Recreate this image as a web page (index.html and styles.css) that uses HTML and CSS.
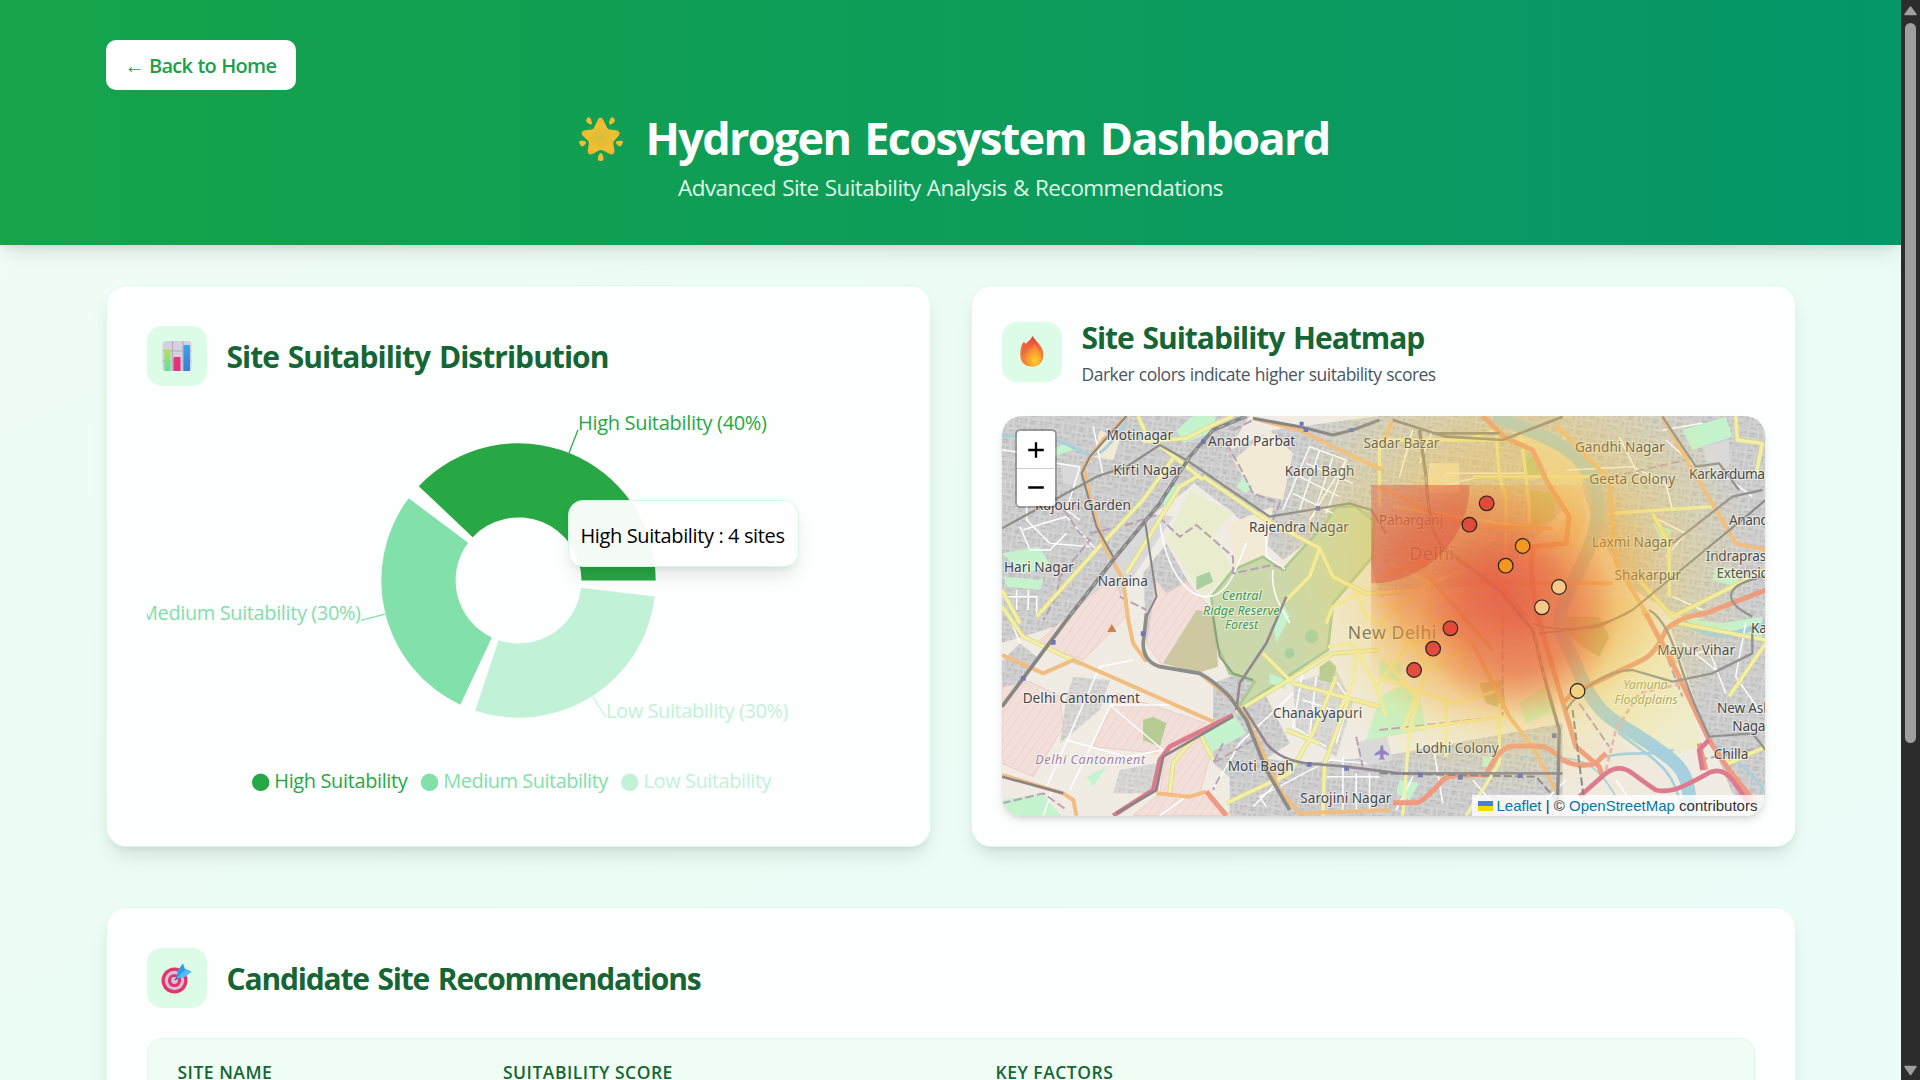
FILE: index.html
```html
<!DOCTYPE html>
<html lang="en">
<head>
<meta charset="utf-8">
<title>Hydrogen Ecosystem Dashboard</title>
<link rel="stylesheet" href="styles.css">
</head>
<body>
<div class="page">
  <header class="hero">
    <a class="back">← Back to Home</a>
    <h1 class="hero-title">
      <svg class="star" viewBox="0 0 44 44">
        <defs><radialGradient id="starFill" cx=".5" cy=".55" r=".6"><stop offset="0" stop-color="#dcb93a"/><stop offset=".6" stop-color="#f0c030"/><stop offset="1" stop-color="#f4a92c"/></radialGradient></defs>
        <path d="M21.500 0.500c1.700 0 2.700 1.800 3.600 3.900l2.900 6.100c.6 1.200 1.300 1.700 2.500 1.900l6.300.9c4.200.6 5 3.500 2.300 6.200l-3.900 4.200c-1 1.100-1.100 1.900-.9 3.300l1.100 5.900c.6 4-2 5.500-5.300 3.800l-5.300-3c-1.900-1-3.700-1-5.600 0l-5.100 3c-3.300 1.800-6 .1-5.300-3.800l1-6.200c.2-1.300 0-2.100-1-3.200L4.200 19.300c-2.700-2.900-1.700-5.500 2.100-6l6.300-.9c1.200-.2 1.900-.7 2.500-1.900l2.900-6.100c.9-2.100 1.800-3.900 3.500-3.900z" fill="url(#starFill)"/>
        <g fill="#f3bd31"><path d="M9 .5c1-.7 2 .2 2.700 1.600.8 1.500 1.700 4.200 1 5-.9 1-3.600-.7-4.900-1.800C6.400 4 7.600 1.500 9 .5zM34 .5c-1-.7-2 .2-2.700 1.600-.8 1.500-1.700 4.200-1 5 .9 1 3.600-.7 4.900-1.800C36.600 4 35.400 1.500 34 .5z"/><path d="M.2 25.500c-.8-1 .3-1.700 1.800-1.700 1.800 0 5 .3 5.300 1.300.3 1.200-2 3.300-3.500 4.300C2.300 30.300.6 26.900.2 25.500zM43.800 25.500c.8-1-.3-1.700-1.800-1.700-1.800 0-5 .3-5.300 1.300-.3 1.200 2 3.300 3.500 4.300 1.500.9 3.200-2.500 3.600-3.900z"/><path d="M21.700 36c1.200 0 2.100 2.400 2.700 4.400.6 2-.2 3.600-2.700 3.600s-3.300-1.600-2.700-3.600c.6-2 1.500-4.400 2.700-4.400z"/></g>
      </svg>
      <span>Hydrogen Ecosystem Dashboard</span>
    </h1>
    <p class="hero-sub">Advanced Site Suitability Analysis &amp; Recommendations</p>
  </header>

  <main class="content">
    <div class="cards">
      <section class="card chart-card">
        <div class="card-head">
          <div class="badge">
            <svg width="30" height="30" viewBox="0 0 30 30">
              <defs>
                <linearGradient id="gb" x1="0" y1="0" x2="0" y2="1"><stop offset="0" stop-color="#b4e356"/><stop offset="1" stop-color="#5fe09c"/></linearGradient>
                <linearGradient id="bb" x1="0" y1="0" x2="0" y2="1"><stop offset="0" stop-color="#35a5f5"/><stop offset="1" stop-color="#3b7bd0"/></linearGradient>
              </defs>
              <rect x=".5" width="29" height="30" rx="3.500" fill="#d6cfdd"/>
              <path d="M10.500 0v30M21 0v30M.5 10h29M.5 20h29" stroke="#b5aec0" stroke-width="1.200"/>
              <path d="M2.500 30V9a1 1 0 0 1 1-1h4a1 1 0 0 1 1 1v21z" fill="url(#gb)"/>
              <path d="M11.500 30V17a1 1 0 0 1 1-1h5a1 1 0 0 1 1 1v13z" fill="#e3337a"/>
              <path d="M21.500 30V5a1 1 0 0 1 1-1h4.500a1 1 0 0 1 1 1v25z" fill="url(#bb)"/>
            </svg>
          </div>
          <h2>Site Suitability Distribution</h2>
        </div>
        <div class="chart">
          <svg class="donut" viewBox="147 386.250 743 419">
            <path fill="#28a745" d="M655.700 580.700A137.200 137.200 0 0 0 418.800 486.400L472.700 537.400A63 63 0 0 1 581.500 580.700Z"/>
            <path fill="#82e0aa" d="M408.600 498.500A137.200 137.200 0 0 0 460.300 704.900L491.800 637.700A63 63 0 0 1 468.100 543Z"/>
            <path fill="#c1f2d7" d="M475.200 710.900A137.200 137.200 0 0 0 654.800 596.700L581.100 588.100A63 63 0 0 1 498.600 640.500Z"/>
            <g fill="none" stroke-width="1.250">
              <path stroke="#28a745" d="M569 453.300L578 430"/>
              <path stroke="#82e0aa" d="M385 614.300L361 620.700"/>
              <path stroke="#c1f2d7" d="M592.700 697L606 717.500"/>
            </g>
            <g class="label">
              <text x="578" y="430" fill="#28a745" textLength="189">High Suitability (40%)</text>
              <text x="361" y="620.700" fill="#82e0aa" text-anchor="end" textLength="221">Medium Suitability (30%)</text>
              <text x="606" y="718" fill="#c1f2d7" textLength="182.500">Low Suitability (30%)</text>
              <circle cx="260.700" cy="782.600" r="8.750" fill="#28a745"/>
              <text x="274.300" y="788" fill="#28a745" textLength="133.500">High Suitability</text>
              <circle cx="429.500" cy="782.600" r="8.750" fill="#82e0aa"/>
              <text x="443.300" y="788" fill="#82e0aa" textLength="165">Medium Suitability</text>
              <circle cx="629.700" cy="782.600" r="8.750" fill="#c1f2d7"/>
              <text x="643.600" y="788" fill="#c1f2d7" textLength="128">Low Suitability</text>
            </g>
          </svg>
          <div class="tooltip">High Suitability : 4 sites</div>
        </div>
      </section>

      <section class="card map-card">
        <div class="card-head">
          <div class="badge">
            <svg width="24" height="31" viewBox="0 0 24 31">
              <defs>
                <linearGradient id="fo" x1="0" y1="0" x2="0" y2="1"><stop offset="0" stop-color="#ee3a3a"/><stop offset=".5" stop-color="#f5793c"/><stop offset="1" stop-color="#ee8434"/></linearGradient>
                <radialGradient id="fi" cx=".6" cy=".75" r=".6"><stop offset="0" stop-color="#fdd22b"/><stop offset="1" stop-color="#f98533"/></radialGradient>
              </defs>
              <path d="M12.500 0c2 3.500 6 6.800 8.600 11 2 3.300 2.900 6.500 1.900 10.800C21.800 27.200 18 30.500 12 30.500 5 30.500.6 26 .3 20 .1 14.500 1 9.500 3.500 6c1.200.2 1.700 1 2 2.300C7 6 10.800 4 12.500 0z" fill="url(#fo)"/>
              <path d="M14.500 8c2 4 7 8 7 14 0 5.500-4 8.500-8.500 8.500S5 27.500 5 23c0-6 7-8.500 9.500-15z" fill="url(#fi)"/>
              <path d="M7.500 8C4.500 11 2.500 14 2.500 19M12 5c-1 4-6 6-7.500 12" fill="none" stroke="#d95f3a" stroke-width=".9"/>
            </svg>
          </div>
          <div>
            <h2 class="t-heat">Site Suitability Heatmap</h2>
            <p class="note">Darker colors indicate higher suitability scores</p>
          </div>
        </div>
        <div class="map">
          <svg class="tiles" viewBox="6 18 2292 1200" preserveAspectRatio="none">
            <defs>
              <pattern id="urb" width="74" height="66" patternUnits="userSpaceOnUse" patternTransform="rotate(8)">
                <rect width="74" height="66" fill="#cccccc"/>
                <path d="M0 12H74M0 34H40M30 50H74M15 0V66M46 12V50M62 0V34M30 34V66" stroke="#dadada" stroke-width="2.500"/>
                <path d="M4 18h8M22 20h16M22 27h12M52 18h6M52 26h6M4 42h8M4 50h6M36 56h14M56 40h12M56 60h10M22 4h14M66 20h6M66 27h5M20 42h6M20 58h6M34 42h8" stroke="#bababa" stroke-width="4"/>
              </pattern>
              <pattern id="mil" width="22" height="22" patternUnits="userSpaceOnUse" patternTransform="rotate(35)">
                <rect width="22" height="22" fill="#f2dfd9"/><path d="M2 0V22" stroke="#efcfc9" stroke-width="2"/>
              </pattern>
              <radialGradient id="hy"><stop offset="0" stop-color="#f5b83c" stop-opacity=".58"/><stop offset=".5" stop-color="#f3c448" stop-opacity=".46"/><stop offset=".78" stop-color="#f1d460" stop-opacity=".24"/><stop offset="1" stop-color="#f1dc70" stop-opacity="0"/></radialGradient>
              <radialGradient id="ho"><stop offset="0" stop-color="#ee6a32" stop-opacity=".55"/><stop offset=".6" stop-color="#f08a34" stop-opacity=".4"/><stop offset="1" stop-color="#f2a53c" stop-opacity="0"/></radialGradient>
              <radialGradient id="hr"><stop offset="0" stop-color="#dc4444" stop-opacity=".55"/><stop offset=".55" stop-color="#e04a44" stop-opacity=".38"/><stop offset="1" stop-color="#e85a3c" stop-opacity="0"/></radialGradient>
              <clipPath id="tile"><rect x="1115" y="225" width="900" height="1000"/></clipPath>
            </defs>
            <rect x="0" y="0" width="2300" height="1220" fill="#f0ece4"/>

            <g fill="url(#urb)">
              <path d="M0 0H760L680 130 560 240 450 320 330 470 200 640 0 700z"/>
              <path d="M570 210L690 120 820 60 1140 18H1690V300L1480 520 1140 560 1070 290 850 450 690 300z"/>
              <path d="M1680 0H2300V640L2050 620 1900 540 1800 380 1700 100z"/>
              <path d="M2010 640L2300 600V1217L2200 1150 2090 880z"/>
              <path d="M690 1030L900 1060 1140 1040 1690 940V1220H690z"/>
              <path d="M430 490L500 400 590 560 470 640 440 700z"/>
              <path d="M700 400L800 330 800 440 700 480z"/>
              <path d="M640 820L740 780 800 860 870 1000 700 1110 640 1060z"/>
              <path d="M0 760L60 700 110 740 60 830 0 900z"/>
              <path d="M220 800L330 810 300 900 180 1000 200 860zM360 1080L470 1060 460 1150 340 1150z" opacity=".75"/>
              <path d="M880 820L1010 780 1060 880 1010 1040 890 960z" opacity=".7"/>
            </g>
            <g fill="#d9d9d9">
              <path d="M180 160l60 10 0 60-50-10zM450 310L520 320 360 560 330 620 200 630z"/>
              <path d="M1070 1000l90-30 20 80-90 20z"/><path d="M2110 110l80-20 0 80-60 20z"/>
            </g>
            <g fill="#f3ead6">
              <path d="M700 150L810 60 880 130 850 270 760 250zM690 340L820 290 800 440 700 480zM300 60l60 30-20 60-60-10z"/>
              <path d="M1290 160l90 0 0 90-100 0zM1540 500l140-30 40 200-150 20z"/>
              <path d="M1480 18L1560 60 1680 110 1750 200 1760 330 1720 420 1640 420 1700 320 1620 140z" fill="#ece0c0"/>
            </g>
            <path d="M570 240L700 310 640 370 700 480 610 560 500 390z" fill="#e9edcd"/>
            <path d="M1680 590L1900 560 2060 800 2110 1010 1960 1050 1820 940 1720 820z" fill="#efeccb"/>
            <path d="M1690 990L1860 1000 2010 1080 2070 1217H1700z" fill="#efe9de"/>

            <g fill="url(#mil)" stroke="#eebfba" stroke-width="2">
              <path d="M340 500L385 610 360 640 250 750 110 700 200 620z"/>
              <path d="M470 510L500 550 560 515 600 560 640 600 650 680 600 700 490 770 440 700z"/>
              <path d="M6 830L90 815 180 860 190 950 100 1100 6 1060z"/>
              <path d="M350 850L620 940 500 1010 470 1030 280 1010z"/>
              <path d="M500 1010L650 970 600 1150 700 1217H400L480 1150z"/>
            </g>

            <path d="M590 600L645 610 655 770 590 790 490 760z" fill="#cdc7a2"/>
            <path d="M700 480L790 440 850 480 900 425 970 350 1010 290 1070 290 1125 335 1120 440 1000 580 985 720 710 900 765 815 690 790 650 700 635 560z" fill="#cbd8ab" stroke="#a9c98f" stroke-width="8"/>
            <g fill="#a8cfa0"><circle cx="936" cy="680" r="20"/><circle cx="870" cy="730" r="15"/><path d="M590 500l40-15 10 30-50 25z"/></g>
            <g fill="#c4f3ce">
              <path d="M530 60l60-50 60 10-20 50-80 30zM6 430l110-20 40 60-90 20zM10 500l120 10-10 30-100-10zM150 120l50-20 20 20-60 20zM500 240l40-20-20 60-30 10zM730 200l30 30-20 20-30-20z"/>
              <path d="M610 970l90-60 40 60-110 60zM820 640l30-60 20 40-40 80zM810 790l50 20 0 30-50-20zM420 80l30-20 10 20-30 20z"/>
              <path d="M1140 860l80-40 40 40 20 100-180 30zM1560 880l90-60 20 80-90 40zM2030 620l140 20 120-20 0 60-200-10zM2050 60l130-40 20 60-120 40z"/>
              <path d="M6 1170l120-20 60 70H6zM1200 1110l60 10-30 50-40-20zM1140 750l70 10-10 60-60-10zM260 1100l60-30-40 60z"/>
              <path d="M1450 1040l30 0 0 30-30 0zM2150 470l80 10-20 50-70-20zM1960 340l60 20-30 40z"/>
            </g>
            <g fill="#b5cc92">
              <path d="M430 930l30-10 40 20-20 70-50-20zM960 770l30-20 20 20-10 50-40-10z"/>
              <path d="M1570 140l50 0 0 60-50 0zM1590 240l80 10-10 80-70 20z"/>
              <path d="M1690 620l110 0 30 60-30 60-50-30-50-40zM1440 820l70-10 10 90-60-20z"/>
            </g>

            <g fill="none" stroke="#a6d0dd" stroke-linecap="round">
              <path d="M6 78C120 72 190 92 240 122S310 130 380 40" stroke-width="9"/>
              <path d="M1500 25C1640 80 1760 120 1788 230S1760 440 1710 540 1680 650 1740 790 1850 930 1950 1000 2070 1080 2075 1217" stroke-width="40"/>
              <path d="M1860 970C1960 1050 2020 1060 2050 1200M1820 1040C1900 1020 1960 1040 2020 1020M2140 1000C2230 1060 2270 1100 2300 1150" stroke-width="8"/>
              <path d="M2060 640C2150 700 2220 670 2300 640" stroke-width="16"/>
              <path d="M1560 1040C1690 1060 1760 1000 1850 1160" stroke-width="5"/>
            </g>

            <g fill="none" stroke="#fff" stroke-width="4.500" stroke-linejoin="round">
              <path d="M6 120L80 130 80 330 150 400 270 410M170 160L240 170 200 300 240 330M70 360L130 340 200 320 290 420M0 560H110V620M50 540V600M85 540V600M20 600L60 700M60 350L90 420 150 420 200 370"/>
              <path d="M480 340C500 480 560 560 620 560S700 500 740 400M800 330L800 440 860 480M820 480C810 560 860 610 870 640M280 50L310 200"/>
              <path d="M400 750L300 770 140 1130M330 890L210 1140M330 885H510M330 885L490 1020 380 1040 200 990M880 850L720 1000 640 1140M800 1190L780 1160 990 1050 1100 1060"/>
              <path d="M850 300L930 110 1040 150 930 330M900 200L1020 260M880 250L1000 310M920 160L1060 220M960 120L900 300M1000 140L940 320M1040 150L980 310"/>
              <path d="M910 780L880 950 980 1010M950 800L930 980M1000 800L1050 870 1010 1000M910 870L1060 920M980 1100H1140M1030 1040V1200M1070 1090V1200M1110 1090V1200"/>
              <path d="M1240 60L1200 200M1300 60L1260 160M1340 190L1580 190M1320 230L1440 200M1700 180L1900 170M1860 80L1920 200M1900 170L2000 220 2020 300M1960 320L2060 370 2000 440M2000 90L2090 170M2020 560L2110 600M2180 200L2260 260M2050 700L2150 780M2240 640L2210 800 2280 900"/>
              <path d="M1240 1100L1190 1200M1300 1000L1330 1180M1420 1110L1480 1180M1700 1110L1640 1170M1900 1180L1850 1110M2090 730L2130 720 2180 850"/>
              <path d="M760 1190L850 1100M560 1160L480 1217M130 1217L160 1130M1990 60L2110 40"/>
            </g>

            <g fill="none" stroke="#b9a0b5" stroke-width="6" stroke-dasharray="26 10">
              <path d="M700 60L760 30M680 100L720 170 760 250 840 280 820 330M150 240L240 370 270 390 180 500 170 560 130 630"/>
              <path d="M270 370L380 345 470 315 540 380 590 345 700 440V490L820 465 860 480M360 560L440 600M660 1100L640 1140M670 1000L640 1060 760 990M1070 980L1090 1070M1840 200L2060 150M1980 680L2050 860"/>
              <path d="M1140 960L1510 920V600M1740 880L1830 1010M6 1180L130 1150 200 1200M2100 1050L2300 1010"/>
            </g>

            <g fill="none" stroke="#d8d78c" stroke-width="14" stroke-linejoin="round">
              <path d="M415 18L440 75 530 145 610 210M430 95L560 85 650 40 700 18M520 145L430 270 280 430 110 620M600 195L540 230 380 490M6 540L60 640"/>
              <path d="M610 200L800 330 960 415 1000 500 1100 550 1280 540M960 415L930 500 850 580M790 730L880 820 1140 890M710 905L1000 730 1140 720M6 590L70 680 240 760"/>
              <path d="M640 1050L600 970 560 1010 520 1060 510 1150M680 1180L870 1090 940 970 1010 800M970 1217L975 1060 1050 860M860 960L960 1000"/>
              <path d="M1960 310L2010 400V560M1900 490L2020 620 2300 480M2210 18L2215 90 2290 100 2270 200M2040 640L2300 690M2190 860L2300 700M2160 1030L2190 1060 2300 1010"/>
            </g>
            <g fill="none" stroke="#f3f0a6" stroke-width="10" stroke-linejoin="round">
              <path d="M415 18L440 75 530 145 610 210M430 95L560 85 650 40 700 18M520 145L430 270 280 430 110 620M600 195L540 230 380 490M6 540L60 640"/>
              <path d="M610 200L800 330 960 415 1000 500 1100 550 1280 540M960 415L930 500 850 580M790 730L880 820 1140 890M710 905L1000 730 1140 720M6 590L70 680 240 760"/>
              <path d="M640 1050L600 970 560 1010 520 1060 510 1150M680 1180L870 1090 940 970 1010 800M970 1217L975 1060 1050 860M860 960L960 1000"/>
              <path d="M985 710L1060 700 1130 830 1230 700 1100 620 1075 550 1000 590 980 640M1075 720L1060 820 1020 900M1130 830L1160 920M1230 700H1420M1140 90L1140 290M1180 290L1500 340 1660 360"/>
              <path d="M1400 90L1490 60 1500 200 1520 260V560M1570 110L1590 290 1590 360M1140 90H1580M1420 200H1770M1830 310L2140 290"/>
              <path d="M1140 640L1290 520 1290 740 1230 960 1210 1217M1290 520L1400 620 1420 700 1560 600M1420 700L1260 600M1420 700L1390 790M1420 700L1290 780M1290 640L1420 600M1140 800L1360 880 1500 840M1340 860V1040M1400 1217L1500 1060V880"/>
              <path d="M1140 590L1290 560 1500 560M1150 740L1250 860 1210 960 1520 920M1170 460L1290 520 1400 480M1200 610L1270 760M1340 560L1500 520"/>
              <path d="M1960 310L2010 400V560M1900 490L2020 620 2300 480M2210 18L2215 90 2290 100 2270 200M2040 640L2300 690M2190 860L2300 700M2160 1030L2190 1060 2300 1010"/>
            </g>

            <g fill="none" stroke="#f2bd80" stroke-width="12" stroke-linejoin="round">
              <path d="M380 18L310 90 250 170 270 260 310 400 370 510 385 630 400 700 440 755"/>
              <path d="M760 25L900 60 1020 120 1150 180M6 735L130 790 220 750 640 935M600 790L700 870 740 920 800 1050 840 1140 900 1210 1170 1200M1180 30L1150 100"/>
              <path d="M6 1095L190 1150 220 1170 230 1217M470 1150L570 1160 620 1145"/>
              <path d="M1140 230L1300 310 1420 350 1660 355M1140 500L1350 430 1480 490 1580 620M1370 520H1840M1670 45L1830 210 1850 460 1960 640"/>
              <path d="M1990 20L2080 180 2210 400 2300 420M1420 700L1530 920 1600 1010 1690 1180M1200 400L1480 720M1930 600L2030 760"/>
            </g>
            <g fill="none" stroke="#ef9a80" stroke-width="15" stroke-linejoin="round">
              <path d="M1450 18L1520 85 1600 120 1640 210 1710 320 1700 400 1600 410 1595 480 1610 600 1680 840 1730 1010 1800 1070 1810 1100"/>
              <path d="M1180 1178H1250Q1270 1178 1330 1110 1350 1090 1460 1095 1500 1010 1540 1008H1620Q1650 1010 1690 1050 1740 1075 1790 1060L1820 1030"/>
              <path d="M1690 880L1720 850 1930 750Q1970 730 2000 660 2040 620 2120 610L2300 540M1940 610L2030 780 2130 990 2190 1080 2270 1180M620 1145L680 1217M2100 1000L2120 1080"/>
            </g>
            <g fill="none" stroke="#dc7b8d" stroke-width="14" stroke-linejoin="round">
              <path d="M340 1217L460 1140 480 1050 510 1010 700 915M1740 1160L1820 1090Q1860 1060 1900 1090T1970 1140Q2010 1150 2060 1125T2130 1088Q2170 1070 2200 1110L2250 1180M2110 1080L2100 1020 2130 990"/>
            </g>
            <path d="M1820 1080L1850 960 1920 850 2050 820" fill="none" stroke="#efb0aa" stroke-width="8" stroke-dasharray="16 10"/>

            <g fill="none" stroke="#868686" stroke-linejoin="round">
              <path d="M740 18L640 60 570 140 480 280 340 450 200 630 6 890" stroke-width="11"/>
              <path d="M760 25L900 50 1000 75 1060 60 1140 30" stroke-width="9"/>
              <path d="M6 355L290 200 380 170 480 105 560 150 810 320 1050 280 1115 300 1160 370" stroke="#909088" stroke-width="7"/>
              <path d="M380 18L270 140 245 190 290 350 340 440M435 330L470 560 440 620" stroke-width="6"/>
              <path d="M440 610L430 700Q430 755 480 770L600 790Q640 810 690 860L740 930 800 1080 870 1200" stroke="#8c8c8a" stroke-width="11"/>
              <path d="M640 620L660 740 700 790 760 810" stroke="#8aa080" stroke-width="6"/>
              <path d="M860 560L800 700 720 820 710 900M730 890L800 1000Q840 1050 920 1060L1040 1070 1200 1090H1690" stroke="#908a90" stroke-width="8"/>
              <path d="M350 1210L470 1140 490 1040 700 920M6 1100L190 1150" stroke="#8a8486" stroke-width="8"/>
              <path d="M1260 60L1280 200Q1290 390 1340 420L1500 540 1600 660 1640 820 1680 960 1675 1170" stroke-width="10"/>
              <path d="M1180 30L1340 80 1510 90 1690 20M1300 70L1500 70" stroke-width="8"/>
              <path d="M1600 640C1700 680 1840 640 1900 600L2070 460 2240 320 2300 270M1620 670L1800 650 1900 600" stroke-width="6"/>
              <path d="M1700 900C1740 840 1820 780 1900 780L2020 815 2140 790 2260 730V650M1950 600C2020 640 2040 780 2090 890L2130 980 2260 970 2300 1020M1990 20L2090 170 2160 160 2220 240M2020 400L2200 260 2290 240M2300 500C2180 520 2160 570 2260 620" stroke="#929290" stroke-width="7"/>
              <path d="M1140 1090L1610 1100 1690 1190M1720 900L1760 1217" stroke-width="6" stroke-dasharray="24 10"/>
            </g>
            <g fill="none" stroke="#c4c4c4" stroke-width="3" stroke-dasharray="18 18"><path d="M740 18L640 60 570 140 480 280 340 450 200 630M1280 200Q1290 390 1340 420L1500 540 1600 660 1640 820"/></g>
            <g fill="#6f76b4"><path d="M604 88h14v14h-14zM900 35h12v12h-12zM912 52h14v14h-14zM1050 54h12v12h-12zM948 288h14v14h-14zM153 690h14v14h-14zM63 798h14v14h-14zM423 664h14v14h-14zM922 1056h14v14h-14zM1034 1068h14v14h-14zM1256 1088h14v14h-14zM1376 1095h14v14h-14zM1556 1090h14v14h-14zM1658 970h14v14h-14z"/></g>
            <path d="M322 666L336 642 350 666z" fill="#cf8247"/>
            <path d="M1147 1005q5 0 5 14l16 12v6l-16-5v13l5 5-10-2-10 2 5-5v-13l-16 5v-6l16-12q0-14 5-14z" fill="#8f7fc4"/>

            <g class="place">
              <text x="320" y="89" textLength="200">Motinagar</text>
              <text x="625" y="107" textLength="262">Anand Parbat</text>
              <text x="340" y="194" textLength="208">Kirti Nagar</text>
              <text x="855" y="198" textLength="210">Karol Bagh</text>
              <text x="1092" y="115" textLength="228">Sadar Bazar</text>
              <text x="105" y="300" textLength="288">Rajouri Garden</text>
              <text x="748" y="366" textLength="300">Rajendra Nagar</text>
              <text x="12" y="487" textLength="210">Hari Nagar</text>
              <text x="294" y="527" textLength="150">Naraina</text>
              <text x="1138" y="345" textLength="193">Paharganj</text>
              <text x="1727" y="125" textLength="270">Gandhi Nagar</text>
              <text x="1770" y="221" textLength="258">Geeta Colony</text>
              <text x="2070" y="208" textLength="228">Karkarduma</text>
              <text x="1778" y="410" textLength="244">Laxmi Nagar</text>
              <text x="2190" y="346" textLength="120">Anand</text>
              <text x="1846" y="509" textLength="200">Shakarpur</text>
              <text x="2120" y="452" textLength="196">Indraprast</text>
              <text x="2152" y="504" textLength="182">Extension</text>
              <text x="68" y="879" textLength="352">Delhi Cantonment</text>
              <text x="820" y="925" textLength="268">Chanakyapuri</text>
              <text x="684" y="1082" textLength="198">Moti Bagh</text>
              <text x="902" y="1179" textLength="274">Sarojini Nagar</text>
              <text x="1248" y="1030" textLength="250">Lodhi Colony</text>
              <text x="1974" y="736" textLength="234">Mayur Vihar</text>
              <text x="2154" y="910" textLength="164">New Ash</text>
              <text x="2200" y="963" textLength="115">Nagar</text>
              <text x="2144" y="1048" textLength="104">Chilla</text>
              <text x="2256" y="670" textLength="48">Ka</text>
              <g class="city">
                <text x="1230" y="451" textLength="134">Delhi</text>
                <text x="1045" y="687" textLength="266">New Delhi</text>
              </g>
              <g class="area" fill="#3f9650">
                <text x="666" y="570" textLength="120">Central</text>
                <text x="610" y="614" textLength="230">Ridge Reserve</text>
                <text x="676" y="658" textLength="100">Forest</text>
              </g>
              <g class="area" fill="#a27fa8"><text x="106" y="1062" textLength="330">Delhi Cantonment</text></g>
              <g class="area" fill="#a5a55c">
                <text x="1872" y="837" textLength="134">Yamuna</text>
                <text x="1846" y="882" textLength="190">Floodplains</text>
              </g>
            </g>

            <ellipse cx="1540" cy="460" rx="720" ry="700" fill="url(#hy)"/>
            <g clip-path="url(#tile)">
              <ellipse cx="1500" cy="540" rx="500" ry="440" fill="url(#ho)"/>
              <circle cx="1560" cy="620" r="300" fill="url(#hr)"/>
              <ellipse cx="1370" cy="470" rx="340" ry="260" fill="url(#hr)" opacity=".6"/>
              <circle cx="1115" cy="225" r="295" fill="#dc4440" fill-opacity=".38"/>
            </g>
            <g stroke="#26211c" stroke-width="3.500" fill-opacity=".93">
              <g fill="#e14438"><circle cx="1462" cy="280" r="22"/><circle cx="1410" cy="344" r="22"/><circle cx="1353" cy="655" r="22"/><circle cx="1301" cy="716" r="22"/><circle cx="1244" cy="780" r="22"/></g>
              <g fill="#f39a1c"><circle cx="1570" cy="408" r="22"/><circle cx="1519" cy="467" r="22"/></g>
              <g fill="#f6cf8c"><circle cx="1679" cy="531" r="22"/><circle cx="1628" cy="592" r="22"/><circle cx="1735" cy="843" r="22" fill="#f6d37c"/></g>
            </g>
          </svg>
          <div class="zoom">
            <svg viewBox="0 0 38 37"><path d="M19.500 11v16M11.500 19h16"/></svg>
            <svg viewBox="0 0 38 37"><path d="M11.500 19h16"/></svg>
          </div>
          <div class="attribution"><svg class="flag" viewBox="0 0 15 10"><path fill="#4c7be1" d="M0 0h15v5H0z"/><path fill="#ffd500" d="M0 5h15v5H0z"/></svg><a>Leaflet</a> | © <a>OpenStreetMap</a> contributors</div>
        </div>
      </section>
    </div>

    <section class="card table-card">
      <div class="card-head">
        <div class="badge">
          <svg width="31" height="31" viewBox="0 0 31 31">
            <circle cx="13.500" cy="17.500" r="13" fill="#e3356b"/><circle cx="13.500" cy="17.500" r="9.700" fill="#d5c5dc"/><circle cx="13.500" cy="17.500" r="6.600" fill="#e3356b"/><circle cx="13.500" cy="17.500" r="3.400" fill="#d5c5dc"/>
            <path d="M14 17L23 8" stroke="#4a5a90" stroke-width="1.600"/>
            <path d="M15.500 14L17 7 22 0.500l2 5.500 6.500 2.500L23.500 14l-7 1.500z" fill="#2f9bea"/><path d="M16 15L24 7l6.500 1.500L23.500 14z" fill="#53bdf7"/>
          </svg>
        </div>
        <h2 class="t-cand">Candidate Site Recommendations</h2>
      </div>
      <div class="table">
        <div class="thead"><span>SITE NAME</span><span>SUITABILITY SCORE</span><span>KEY FACTORS</span></div>
      </div>
    </section>
  </main>
</div>
<div class="scrollbar">
  <svg viewBox="0 0 19 23"><path d="M9.500 7L15 14.500H4z"/></svg>
  <div class="thumb"></div>
  <svg viewBox="0 0 19 23"><path d="M9.500 17.500L15 9.500H4z"/></svg>
</div>
</body>
</html>
```
FILE: styles.css
```css
* { box-sizing: border-box; margin: 0; padding: 0; }
body {
  display: flex;
  width: 1920px;
  height: 1080px;
  overflow: hidden;
  font-family: "Open Sans", "Noto Sans", sans-serif;
}
.page {
  flex: 1;
  height: 1080px;
  overflow: hidden;
  background: linear-gradient(to bottom right, #f0fdf4, #ebfcf5 50%, #ecfdf9);
}
.hero {
  position: relative;
  height: 245px;
  padding: 40px 105.5px 0;
  background: linear-gradient(to right, #16a34a, #059669);
  box-shadow: 0 12px 19px -4px rgba(0, 0, 0, .1), 0 5px 8px -5px rgba(0, 0, 0, .1);
}
.back {
  display: block;
  width: 190px;
  height: 50px;
  padding-left: 19px;
  border-radius: 10px;
  background: #fff;
  color: #16a34a;
  font-size: 20px;
  font-weight: 600;
  line-height: 52px;
  letter-spacing: -.72px;
  word-spacing: .7px;
  white-space: nowrap;
}
.hero-title {
  display: flex;
  justify-content: center;
  gap: 23px;
  height: 50px;
  margin: 22.500px 0 0 7px;
  color: #fff;
  font-size: 45px;
  font-weight: 700;
  line-height: 50px;
  letter-spacing: -1.700px;
  word-spacing: 4px;
  white-space: nowrap;
}
.star { width: 44px; height: 44px; margin-top: 4.500px; }
.hero-sub {
  margin-top: 7.500px;
  color: #dcfce7;
  font-size: 22.500px;
  line-height: 35px;
  letter-spacing: -.6px;
  word-spacing: 1px;
  text-align: center;
}
.content {
  display: flex;
  flex-direction: column;
  gap: 61px;
  padding: 40px 105.500px 0;
}
.cards { display: grid; grid-template-columns: 825px 825px; gap: 40px; height: 561px; }
.card {
  padding: 40px;
  border: 1px solid #dcfce7;
  border-radius: 20px;
  background: #fdfffe;
  box-shadow: 0 12px 19px -4px rgba(0, 0, 0, .1), 0 5px 8px -5px rgba(0, 0, 0, .1);
}
.map-card { padding: 30px; }
.table-card { height: 400px; }
.card-head { display: flex; align-items: center; gap: 20px; }
.badge {
  display: grid;
  place-items: center;
  width: 60px;
  height: 60px;
  border-radius: 15px;
  background: #dcfce7;
}
h2 {
  padding-top: 2px;
  color: #166534;
  font-size: 30px;
  font-weight: 700;
  line-height: 40px;
  letter-spacing: -.98px;
  word-spacing: 2px;
}
.t-heat { letter-spacing: -1.030px; }
.t-cand { letter-spacing: -1.180px; }
.note {
  margin-top: 4px;
  color: #4b5563;
  font-size: 17.500px;
  line-height: 25px;
  letter-spacing: -.52px;
  word-spacing: .7px;
}
.chart { position: relative; height: 419px; }
.donut { display: block; width: 743px; height: 419px; }
.label { font-size: 20px; }
.tooltip {
  position: absolute;
  left: 421px;
  top: 114px;
  width: 231px;
  height: 67px;
  padding-left: 12px;
  border: 1px solid #d1fae5;
  border-radius: 15px;
  background: rgba(255, 255, 255, .95);
  box-shadow: 0 12px 19px -4px rgba(0, 0, 0, .1), 0 5px 8px -5px rgba(0, 0, 0, .1);
  font-size: 20px;
  line-height: 69px;
  letter-spacing: -.38px;
  white-space: nowrap;
}
.map {
  position: relative;
  height: 400px;
  margin-top: 29px;
  overflow: hidden;
  border-radius: 20px;
  box-shadow: 0 5px 8px -1px rgba(0, 0, 0, .12), 0 2px 5px -2px rgba(0, 0, 0, .1);
}
.tiles { display: block; width: 100%; height: 400px; }
.place {
  fill: #454545;
  stroke: rgba(255, 255, 255, .6);
  stroke-width: 6px;
  paint-order: stroke;
  font-family: "Noto Sans", sans-serif;
  font-size: 41px;
}
.city { font-size: 53px; fill: #555; }
.area { font-size: 38px; font-style: italic; }
.zoom {
  position: absolute;
  left: 13px;
  top: 12.500px;
  width: 42px;
  height: 79px;
  border: 2.500px solid rgba(0, 0, 0, .25);
  border-radius: 5px;
  background: #fff;
  background-clip: padding-box;
}
.zoom svg { display: block; width: 37px; height: 37px; fill: none; stroke: #000; stroke-width: 2.400px; }
.zoom svg + svg { border-top: 1px solid #ccc; }
.attribution {
  position: absolute;
  right: 0;
  bottom: 0;
  width: 293px;
  height: 21px;
  padding-left: 6px;
  background: rgba(255, 255, 255, .8);
  color: #333;
  font: 15px/21px "Liberation Sans", Arial, sans-serif;
  white-space: nowrap;
}
.attribution a { color: #0078a8; }
.flag { width: 15px; height: 10px; margin-right: 4px; }
.table {
  height: 200px;
  margin-top: 30px;
  border: 1px solid #dcfce7;
  border-radius: 15px;
  background: #f0fdf4;
}
.thead {
  display: grid;
  grid-template-columns: 325.500px 492.500px 1fr;
  padding: 20.500px 30px;
  color: #166534;
  font-size: 17.500px;
  font-weight: 600;
  line-height: 25px;
  letter-spacing: .5px;
}
.scrollbar {
  display: flex;
  flex-direction: column;
  width: 19px;
  background: #2c2c2c;
}
.scrollbar svg { width: 19px; height: 23px; fill: #9f9f9f; stroke: #9f9f9f; stroke-width: 1.500px; stroke-linejoin: round; }
.thumb { width: 11px; height: 720px; margin: 0 4px auto; border-radius: 6px; background: #9f9f9f; }
```
